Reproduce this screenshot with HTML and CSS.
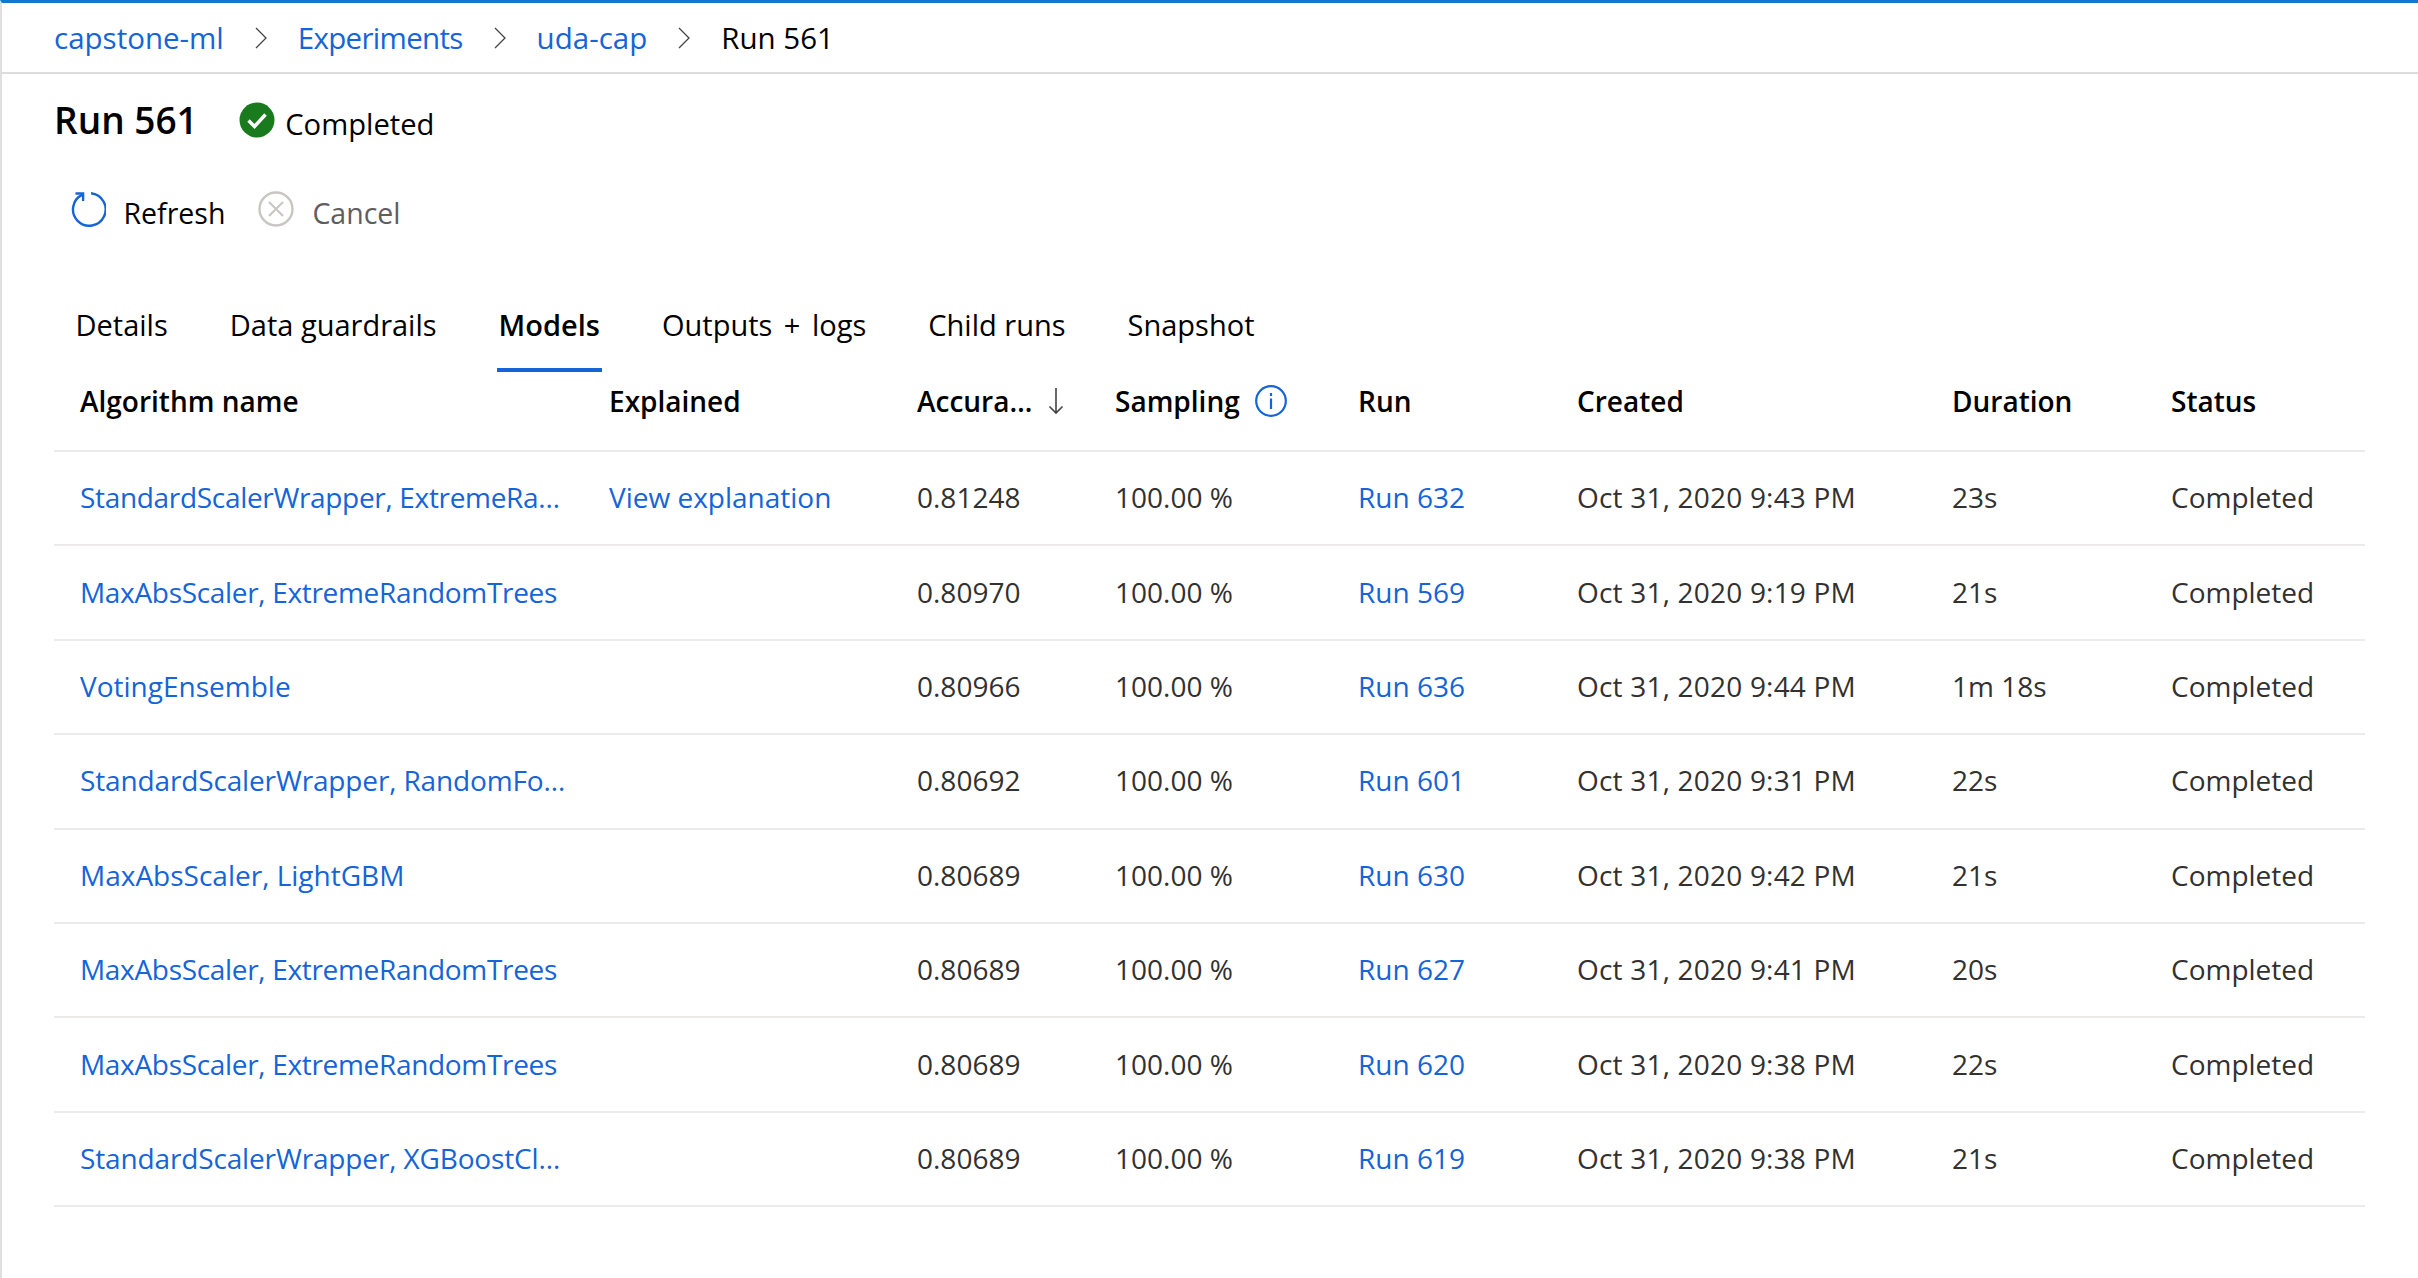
FILE: index.html
```html
<!DOCTYPE html>
<html lang="en-US">
  <head>
    <title>Run 561</title>
    <link rel="stylesheet" href="styles.css">
  </head>
  <body>
    <nav class="breadcrumb">
      <a href="#">capstone-ml</a>
      <svg class="crumb-sep" viewBox="0 0 12 22"><path d="M1 1l10 10L1 21"/></svg>
      <a class="crumb-narrow" href="#">Experiments</a>
      <svg class="crumb-sep" viewBox="0 0 12 22"><path d="M1 1l10 10L1 21"/></svg>
      <a href="#">uda-cap</a>
      <svg class="crumb-sep" viewBox="0 0 12 22"><path d="M1 1l10 10L1 21"/></svg>
      <span>Run 561</span>
    </nav>

    <main class="content">
      <header class="title-row">
        <h1>Run 561</h1>
        <svg class="status-icon" viewBox="0 0 36 36">
          <circle cx="18" cy="18" r="17.5" fill="#1a7a1e"/>
          <path d="M9.5 18.5l6 6L26.5 12.5" fill="none" stroke="#fff" stroke-width="3.4"/>
        </svg>
        <span class="status-text">Completed</span>
      </header>

      <div class="toolbar">
        <button class="tool-btn" type="button">
          <svg class="tool-icon" viewBox="0 0 36 36">
            <path d="M12.5 3.6A16.3 16.3 0 1 0 21 2.2" fill="none" stroke="#1564d8" stroke-width="2.4"/>
            <path d="M5.5 2.5h7.6v7.6" fill="none" stroke="#1564d8" stroke-width="2.4"/>
          </svg>
          Refresh
        </button>
        <button class="tool-btn tool-disabled" type="button">
          <svg class="tool-icon" viewBox="0 0 36 36">
            <circle cx="18" cy="18" r="16.5" fill="none" stroke="#c8c6c4" stroke-width="2.4"/>
            <path d="M11 11l14 14M25 11L11 25" fill="none" stroke="#c8c6c4" stroke-width="2"/>
          </svg>
          Cancel
        </button>
      </div>

      <div class="tabs">
        <a class="tab" href="#">Details</a>
        <a class="tab" href="#">Data guardrails</a>
        <a class="tab tab-active" href="#">Models</a>
        <a class="tab tab-wide" href="#">Outputs + logs</a>
        <a class="tab" href="#">Child runs</a>
        <a class="tab" href="#">Snapshot</a>
      </div>

      <div class="models">
        <div class="row head">
          <div>Algorithm name</div>
          <div>Explained</div>
          <div class="with-icon">Accura…
            <svg class="sort-icon" viewBox="0 0 16 28"><path d="M8 1v25M1.5 19.5L8 26l6.5-6.5"/></svg>
          </div>
          <div class="with-icon">Sampling
            <svg class="info-icon" viewBox="0 0 32 32">
              <circle cx="16" cy="16" r="14.8"/>
              <path d="M16 13.5V24M16 8v3"/>
            </svg>
          </div>
          <div>Run</div>
          <div>Created</div>
          <div>Duration</div>
          <div>Status</div>
        </div>

        <div class="row">
          <a class="name-tight" href="#">StandardScalerWrapper, ExtremeRa…</a>
          <a href="#">View explanation</a>
          <div>0.81248</div>
          <div>100.00 %</div>
          <a href="#">Run 632</a>
          <div>Oct 31, 2020 9:43 PM</div>
          <div>23s</div>
          <div>Completed</div>
        </div>
        <div class="row">
          <a class="name-tight" href="#">MaxAbsScaler, ExtremeRandomTrees</a>
          <div></div>
          <div>0.80970</div>
          <div>100.00 %</div>
          <a href="#">Run 569</a>
          <div>Oct 31, 2020 9:19 PM</div>
          <div>21s</div>
          <div>Completed</div>
        </div>
        <div class="row">
          <a href="#">VotingEnsemble</a>
          <div></div>
          <div>0.80966</div>
          <div>100.00 %</div>
          <a href="#">Run 636</a>
          <div>Oct 31, 2020 9:44 PM</div>
          <div>1m 18s</div>
          <div>Completed</div>
        </div>
        <div class="row">
          <a class="name-snug" href="#">StandardScalerWrapper, RandomFo…</a>
          <div></div>
          <div>0.80692</div>
          <div>100.00 %</div>
          <a href="#">Run 601</a>
          <div>Oct 31, 2020 9:31 PM</div>
          <div>22s</div>
          <div>Completed</div>
        </div>
        <div class="row">
          <a href="#">MaxAbsScaler, LightGBM</a>
          <div></div>
          <div>0.80689</div>
          <div>100.00 %</div>
          <a href="#">Run 630</a>
          <div>Oct 31, 2020 9:42 PM</div>
          <div>21s</div>
          <div>Completed</div>
        </div>
        <div class="row">
          <a class="name-tight" href="#">MaxAbsScaler, ExtremeRandomTrees</a>
          <div></div>
          <div>0.80689</div>
          <div>100.00 %</div>
          <a href="#">Run 627</a>
          <div>Oct 31, 2020 9:41 PM</div>
          <div>20s</div>
          <div>Completed</div>
        </div>
        <div class="row">
          <a class="name-tight" href="#">MaxAbsScaler, ExtremeRandomTrees</a>
          <div></div>
          <div>0.80689</div>
          <div>100.00 %</div>
          <a href="#">Run 620</a>
          <div>Oct 31, 2020 9:38 PM</div>
          <div>22s</div>
          <div>Completed</div>
        </div>
        <div class="row">
          <a class="name-snug" href="#">StandardScalerWrapper, XGBoostCl…</a>
          <div></div>
          <div>0.80689</div>
          <div>100.00 %</div>
          <a href="#">Run 619</a>
          <div>Oct 31, 2020 9:38 PM</div>
          <div>21s</div>
          <div>Completed</div>
        </div>
      </div>
    </main>
  </body>
</html>
```

FILE: styles.css
```css
html, body {
  margin: 0;
  height: 100%;
}

body {
  box-sizing: border-box;
  min-height: 1278px;
  overflow: hidden;
  border-top: 3px solid #0f78d4;
  border-left: 2px solid #e1dfdd;
  background: white;
  color: #000;
  font-family: "Open Sans", "Noto Sans", sans-serif;
  font-size: 28px;
}

a {
  color: #1564d8;
  text-decoration: none;
}

.breadcrumb {
  display: flex;
  align-items: center;
  height: 69px;
  padding-left: 52px;
  border-bottom: 2px solid #dcdcdc;
  font-size: 29.5px;
}

.crumb-sep {
  width: 12px;
  height: 22px;
  margin: 0 31px;
  fill: none;
  stroke: #444;
  stroke-width: 1.3;
}

.crumb-narrow {
  letter-spacing: -.7px;
}

.content {
  padding: 0 53px 0 52px;
}

.title-row {
  display: flex;
  align-items: center;
  height: 91px;
}

h1 {
  margin: 0 41.5px 0 0;
  font-size: 37px;
  font-weight: 600;
}

.status-icon {
  width: 36px;
  height: 36px;
}

.status-text {
  margin-left: 10px;
  padding-top: 8px;
  font-size: 29.2px;
}

.toolbar {
  display: flex;
  gap: 33px;
  height: 96px;
  padding: 0 0 0 15.5px;
  align-items: center;
}

.tool-btn {
  display: flex;
  align-items: center;
  padding: 0;
  border: none;
  background: none;
  color: #000;
  font: inherit;
  font-size: 28.5px;
}

.tool-icon {
  width: 36px;
  height: 36px;
  margin: -9px 18px 0 0;
}

.tool-disabled {
  color: #605e5c;
}

.tabs {
  display: flex;
  gap: 62px;
  height: 111px;
  padding: 44px 0 0 21.5px;
  box-sizing: border-box;
  font-size: 29px;
}

.tab {
  position: relative;
  color: #000;
}

.tab-active {
  font-weight: 600;
}

.tab-wide {
  word-spacing: 4px;
}

.tab-active::after {
  content: "";
  position: absolute;
  left: -2px;
  right: -2px;
  top: 63px;
  height: 4px;
  background: #1564d8;
}

.row {
  display: grid;
  grid-template-columns: 529px 308px 198px 243px 219px 375px 219px 1fr;
  align-items: center;
  height: 94.4px;
  box-sizing: border-box;
  padding: 0 0 2px 26px;
  border-bottom: 2px solid #edebe9;
  color: #323130;
}

.row:not(.head) > :nth-child(6) {
  letter-spacing: .2px;
}

.head {
  height: 80px;
  color: #000;
  font-weight: 600;
  padding-bottom: 20px;
}

.name-tight {
  letter-spacing: -.32px;
}

.name-snug {
  letter-spacing: -.14px;
}

.with-icon {
  display: flex;
  align-items: center;
}

.sort-icon {
  width: 16px;
  height: 28px;
  margin-left: 16px;
  fill: none;
  stroke: #444;
  stroke-width: 1.6;
}

.info-icon {
  width: 32px;
  height: 32px;
  margin-left: 15px;
  fill: none;
  stroke: #1564d8;
  stroke-width: 2.2;
}
```
